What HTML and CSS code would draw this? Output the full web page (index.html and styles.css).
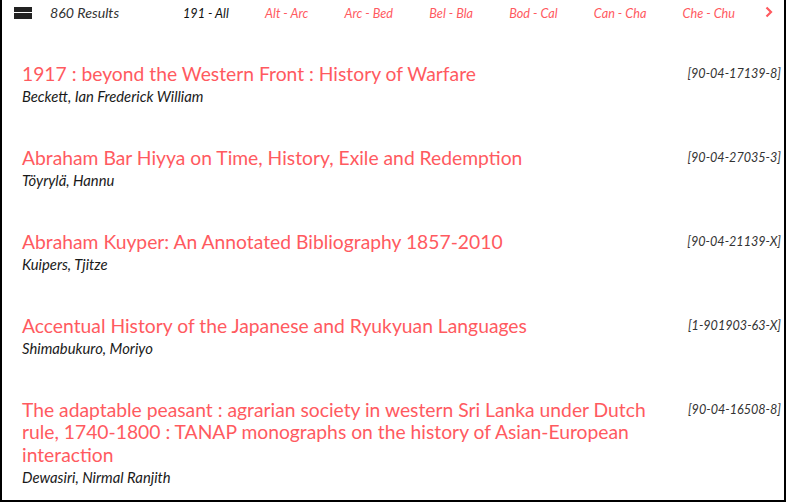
FILE: index.html
```html
<!DOCTYPE html>
<html>
<head>
<meta charset="utf-8">
<link rel="stylesheet" href="styles.css">
</head>
<body>
<div class="page">
  <div class="topbar">
    <span class="menu-icon"></span>
    <span class="count">860 Results</span>
    <nav class="ranges">
      <span class="range current">191 - All</span>
      <span class="range">Alt - Arc</span>
      <span class="range">Arc - Bed</span>
      <span class="range">Bel - Bla</span>
      <span class="range">Bod - Cal</span>
      <span class="range">Can - Cha</span>
      <span class="range">Che - Chu</span>
    </nav>
    <svg class="next" width="8" height="12" viewBox="0 0 8 12"><path d="M1.5 1.5 L6 6 L1.5 10.5" fill="none" stroke="#ff5a5f" stroke-width="2.2"/></svg>
  </div>
  <div class="results">
    <div class="item">
      <div class="info">
        <div class="title">1917 : beyond the Western Front : History of Warfare</div>
        <div class="author">Beckett, Ian Frederick William</div>
      </div>
      <div class="isbn">[90-04-17139-8]</div>
    </div>
    <div class="item">
      <div class="info">
        <div class="title">Abraham Bar Hiyya on Time, History, Exile and Redemption</div>
        <div class="author">Töyrylä, Hannu</div>
      </div>
      <div class="isbn">[90-04-27035-3]</div>
    </div>
    <div class="item">
      <div class="info">
        <div class="title">Abraham Kuyper: An Annotated Bibliography 1857-2010</div>
        <div class="author">Kuipers, Tjitze</div>
      </div>
      <div class="isbn">[90-04-21139-X]</div>
    </div>
    <div class="item">
      <div class="info">
        <div class="title">Accentual History of the Japanese and Ryukyuan Languages</div>
        <div class="author">Shimabukuro, Moriyo</div>
      </div>
      <div class="isbn">[1-901903-63-X]</div>
    </div>
    <div class="item">
      <div class="info">
        <div class="title">The adaptable peasant : agrarian society in western Sri Lanka under Dutch rule, 1740-1800 : TANAP monographs on the history of Asian-European interaction</div>
        <div class="author">Dewasiri, Nirmal Ranjith</div>
      </div>
      <div class="isbn">[90-04-16508-8]</div>
    </div>
  </div>
</div>
</body>
</html>
```
FILE: styles.css
```css
html, body {
  margin: 0;
  padding: 0;
  background: #fff;
}
body {
  font-family: "Lato", "Liberation Sans", sans-serif;
}
.page {
  width: 786px;
  height: 502px;
  box-sizing: border-box;
  border: 2px solid #000;
  border-top: none;
  overflow: hidden;
}
.topbar {
  display: flex;
  align-items: center;
  height: 25px;
  padding-left: 12px;
  padding-right: 11px;
  font-style: italic;
  font-size: 12.7px;
}
.menu-icon {
  width: 18px;
  height: 12px;
  background: linear-gradient(#222 0, #222 5px, #fff 5px, #fff 6px, #222 6px);
  flex: none;
}
.count {
  margin-left: 18px;
  width: 133px;
  color: #333;
  font-size: 14.2px;
}
.ranges {
  display: flex;
  gap: 36.2px;
}
.range {
  color: #ff5a5f;
}
.range.current {
  color: #111;
}
.next {
  margin-left: auto;
  margin-top: -2px;
}
.results {
  padding: 37.5px 3px 0 20px;
}
.item {
  display: flex;
  justify-content: space-between;
  align-items: flex-start;
  margin-bottom: 39.5px;
}
.info {
  flex: 1;
  padding-right: 14px;
}
.title {
  color: #ff5a5f;
  font-size: 19.3px;
  line-height: 22.5px;
}
.author {
  font-style: italic;
  font-size: 14.8px;
  line-height: 22px;
  color: #1a1a1a;
}
.isbn {
  font-style: italic;
  font-size: 12.6px;
  color: #333;
  line-height: 22px;
  white-space: nowrap;
}
```
